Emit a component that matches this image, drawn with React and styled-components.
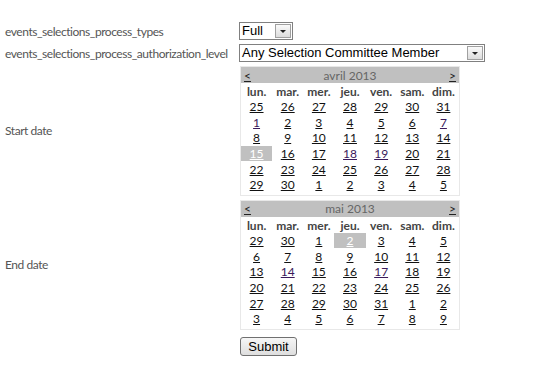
import React from 'react';
import styled, { createGlobalStyle } from 'styled-components';

const GlobalStyle = createGlobalStyle`
  html, body {
    margin: 0;
    padding: 0;
    background: #fff;
  }
  body {
    font-family: "Lato", "Noto Sans", sans-serif;
    font-size: 12px;
  }
`;

const Form = styled.form`
  display: grid;
  grid-template-columns: 234px auto;
  row-gap: 4px;
  align-items: center;
  padding: 22px 0 0 5px;
`;

const Label = styled.label`
  color: #555;
  font-size: 12px;
  letter-spacing: -0.45px;
  white-space: nowrap;
`;

const Field = styled.div`
  display: flex;
`;

const Select = styled.div`
  display: flex;
  align-items: center;
  box-sizing: border-box;
  width: ${p => p.width}px;
  height: 18px;
  border: 1px solid #808080;
  background: #fff;
  font-family: "Liberation Sans", Arial, sans-serif;
  font-size: 13px;
  color: #000;
`;

const SelectValue = styled.span`
  flex: 1;
  padding-left: 2px;
  line-height: 16px;
`;

const Arrow = styled.span`
  display: flex;
  align-items: center;
  justify-content: center;
  box-sizing: border-box;
  width: 16px;
  height: 14px;
  margin-right: 1px;
  border: 1px solid #a0a0a0;
  background: linear-gradient(#fafafa, #dcdcdc);
  &::after {
    content: '';
    border-left: 3px solid transparent;
    border-right: 3px solid transparent;
    border-top: 3px solid #222;
  }
`;

const Calendar = styled.div`
  box-sizing: border-box;
  width: 220px;
  border: 1px solid #e8e8e8;
  margin-left: 1px;
`;

const CalHeader = styled.div`
  display: flex;
  align-items: center;
  justify-content: space-between;
  height: 16px;
  padding: 0 3px;
  background: #c0c0c0;
  color: #666;
  font-size: 12px;
`;

const NavLink = styled.a`
  color: #222;
  text-decoration: underline;
`;

const Grid = styled.div`
  display: grid;
  grid-template-columns: repeat(7, 1fr);
  grid-auto-rows: 15.7px;
  padding-bottom: 2px;
`;

const DayName = styled.div`
  display: flex;
  align-items: center;
  justify-content: center;
  height: 17px;
  font-weight: bold;
  color: #444;
  font-size: 12px;
`;

const Day = styled.div`
  display: flex;
  align-items: center;
  justify-content: center;
  margin: 0.5px 0;
  background: ${p => (p.selected ? '#c0c0c0' : 'transparent')};
  a {
    color: ${p => (p.selected ? '#fff' : p.visited ? '#3a1a5b' : '#111')};
    text-decoration: underline;
    font-size: 12px;
  }
`;

const SubmitButton = styled.button`
  box-sizing: border-box;
  width: 57px;
  height: 19px;
  margin-left: 1px;
  margin-top: 3px;
  padding: 0;
  border: 1px solid #707070;
  border-radius: 3px;
  background: linear-gradient(#f6f6f6, #dedede);
  font-family: "Liberation Sans", Arial, sans-serif;
  font-size: 13px;
  color: #000;
`;

const dayNames = ['lun.', 'mar.', 'mer.', 'jeu.', 'ven.', 'sam.', 'dim.'];

const april = [
  25, 26, 27, 28, 29, 30, 31,
  1, 2, 3, 4, 5, 6, 7,
  8, 9, 10, 11, 12, 13, 14,
  15, 16, 17, 18, 19, 20, 21,
  22, 23, 24, 25, 26, 27, 28,
  29, 30, 1, 2, 3, 4, 5,
];

const may = [
  29, 30, 1, 2, 3, 4, 5,
  6, 7, 8, 9, 10, 11, 12,
  13, 14, 15, 16, 17, 18, 19,
  20, 21, 22, 23, 24, 25, 26,
  27, 28, 29, 30, 31, 1, 2,
  3, 4, 5, 6, 7, 8, 9,
];

function Month({ title, days, selectedIndex, visited }) {
  return (
    <Calendar>
      <CalHeader>
        <NavLink href="#">&lt;</NavLink>
        <span>{title}</span>
        <NavLink href="#">&gt;</NavLink>
      </CalHeader>
      <Grid>
        {dayNames.map(d => <DayName key={d}>{d}</DayName>)}
        {days.map((d, i) => (
          <Day key={i} selected={i === selectedIndex} visited={visited.includes(i)}>
            <a href="#">{d}</a>
          </Day>
        ))}
      </Grid>
    </Calendar>
  );
}

export default function App() {
  return (
    <>
      <GlobalStyle />
      <Form onSubmit={e => e.preventDefault()}>
        <Label>events_selections_process_types</Label>
        <Field>
          <Select width={54}>
            <SelectValue>Full</SelectValue>
            <Arrow />
          </Select>
        </Field>

        <Label>events_selections_process_authorization_level</Label>
        <Field>
          <Select width={246}>
            <SelectValue>Any Selection Committee Member</SelectValue>
            <Arrow />
          </Select>
        </Field>

        <Label>Start date</Label>
        <Field>
          <Month title="avril 2013" days={april} selectedIndex={21} visited={[7, 13, 24, 25]} />
        </Field>

        <Label>End date</Label>
        <Field>
          <Month title="mai 2013" days={may} selectedIndex={3} visited={[15, 18]} />
        </Field>

        <span />
        <Field>
          <SubmitButton type="submit">Submit</SubmitButton>
        </Field>
      </Form>
    </>
  );
}
